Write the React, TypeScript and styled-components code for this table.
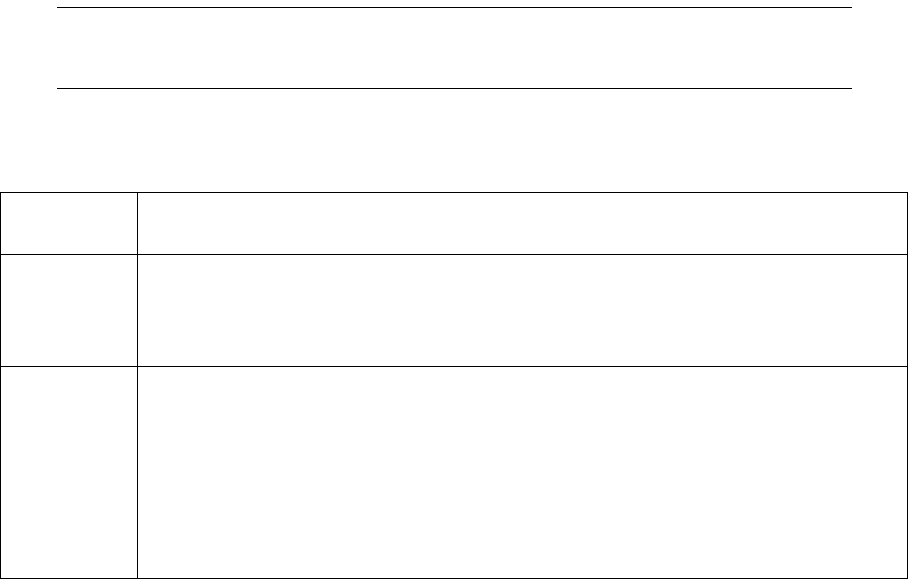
import React from "react";
import styled, { createGlobalStyle } from "styled-components";

const Global = createGlobalStyle`
  * { box-sizing: border-box; }
  html, body { margin: 0; padding: 0; background: #ffffff; }
  body { font-family: "Liberation Serif", "Times New Roman", serif; color: #000; }
`;

const Page = styled.div`
  width: 908px;
  display: flex;
  flex-direction: column;
`;

const Header = styled.header`
  margin: 7px 0 0 57px;
  width: 795px;
  height: 82px;
  border-top: 1px solid #000;
  border-bottom: 1px solid #000;
`;

const Table = styled.div`
  margin-top: 103px;
  display: grid;
  grid-template-columns: 137px 770px;
  border-left: 1px solid #000;
  border-top: 1px solid #000;
`;

const Cell = styled.div<{ $h: number }>`
  height: ${(p) => p.$h}px;
  border-right: 1px solid #000;
  border-bottom: 1px solid #000;
`;

const rows = [62, 112, 212];

export default function App() {
  return (
    <>
      <Global />
      <Page>
        <Header />
        <Table>
          {rows.map((h, i) => (
            <React.Fragment key={i}>
              <Cell $h={h} />
              <Cell $h={h} />
            </React.Fragment>
          ))}
        </Table>
      </Page>
    </>
  );
}
